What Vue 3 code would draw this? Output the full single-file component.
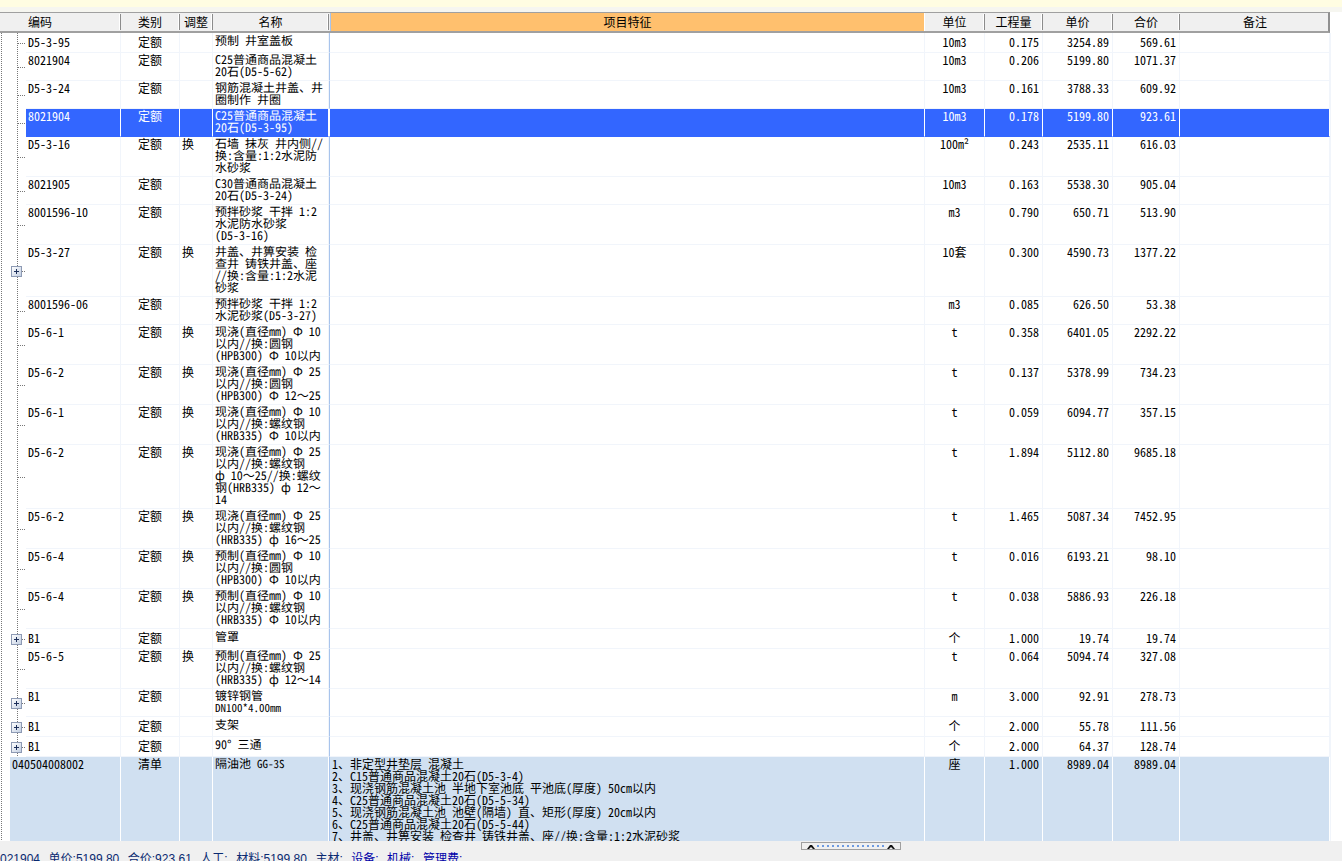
<script setup>
const rows = [
  { code: 'D5-3-95', lines: ['预制 井室盖板'], unit: '10m3', qty: '0.175', price: '3254.89', total: '569.61' },
  { code: '8021904', lines: ['C25普通商品混凝土', '20石(D5-5-62)'], unit: '10m3', qty: '0.206', price: '5199.80', total: '1071.37' },
  { code: 'D5-3-24', lines: ['钢筋混凝土井盖、井', '圈制作 井圈'], unit: '10m3', qty: '0.161', price: '3788.33', total: '609.92' },
  { code: '8021904', selected: true, lines: ['C25普通商品混凝土', '20石(D5-3-95)'], unit: '10m3', qty: '0.178', price: '5199.80', total: '923.61' },
  { code: 'D5-3-16', adj: '换', lines: ['石墙 抹灰 井内侧//', '换:含量:1:2水泥防', '水砂浆'], unit: '100m²', qty: '0.243', price: '2535.11', total: '616.03' },
  { code: '8021905', lines: ['C30普通商品混凝土', '20石(D5-3-24)'], unit: '10m3', qty: '0.163', price: '5538.30', total: '905.04' },
  { code: '8001596-10', lines: ['预拌砂浆 干拌 1:2', '水泥防水砂浆', '(D5-3-16)'], unit: 'm3', qty: '0.790', price: '650.71', total: '513.90' },
  { code: 'D5-3-27', adj: '换', plus: true, lines: ['井盖、井箅安装 检', '查井 铸铁井盖、座', '//换:含量:1:2水泥', '砂浆'], unit: '10套', qty: '0.300', price: '4590.73', total: '1377.22' },
  { code: '8001596-06', lines: ['预拌砂浆 干拌 1:2', '水泥砂浆(D5-3-27)'], unit: 'm3', qty: '0.085', price: '626.50', total: '53.38' },
  { code: 'D5-6-1', adj: '换', lines: ['现浇(直径mm) Ф 10', '以内//换:圆钢', '(HPB300) Ф 10以内'], unit: 't', qty: '0.358', price: '6401.05', total: '2292.22' },
  { code: 'D5-6-2', adj: '换', lines: ['现浇(直径mm) Ф 25', '以内//换:圆钢', '(HPB300) Ф 12～25'], unit: 't', qty: '0.137', price: '5378.99', total: '734.23' },
  { code: 'D5-6-1', adj: '换', lines: ['现浇(直径mm) Ф 10', '以内//换:螺纹钢', '(HRB335) Ф 10以内'], unit: 't', qty: '0.059', price: '6094.77', total: '357.15' },
  { code: 'D5-6-2', adj: '换', lines: ['现浇(直径mm) Ф 25', '以内//换:螺纹钢', 'ф 10～25//换:螺纹', '钢(HRB335) ф 12～', '14'], unit: 't', qty: '1.894', price: '5112.80', total: '9685.18' },
  { code: 'D5-6-2', adj: '换', lines: ['现浇(直径mm) Ф 25', '以内//换:螺纹钢', '(HRB335) ф 16～25'], unit: 't', qty: '1.465', price: '5087.34', total: '7452.95' },
  { code: 'D5-6-4', adj: '换', lines: ['预制(直径mm) Ф 10', '以内//换:圆钢', '(HPB300) Ф 10以内'], unit: 't', qty: '0.016', price: '6193.21', total: '98.10' },
  { code: 'D5-6-4', adj: '换', lines: ['预制(直径mm) Ф 10', '以内//换:螺纹钢', '(HRB335) Ф 10以内'], unit: 't', qty: '0.038', price: '5886.93', total: '226.18' },
  { code: 'B1', plus: true, lines: ['管罩'], unit: '个', qty: '1.000', price: '19.74', total: '19.74' },
  { code: 'D5-6-5', adj: '换', lines: ['预制(直径mm) Ф 25', '以内//换:螺纹钢', '(HRB335) ф 12～14'], unit: 't', qty: '0.064', price: '5094.74', total: '327.08' },
  { code: 'B1', plus: true, lines: ['镀锌钢管', 'DN100*4.00mm'], unit: 'm', qty: '3.000', price: '92.91', total: '278.73' },
  { code: 'B1', plus: true, lines: ['支架'], unit: '个', qty: '2.000', price: '55.78', total: '111.56' },
  { code: 'B1', plus: true, lines: ['90° 三通'], unit: '个', qty: '2.000', price: '64.37', total: '128.74' },
]

const features = [
  '1、非定型井垫层 混凝土',
  '2、C15普通商品混凝土20石(D5-3-4)',
  '3、现浇钢筋混凝土池 半地下室池底 平池底(厚度) 50cm以内',
  '4、C25普通商品混凝土20石(D5-5-34)',
  '5、现浇钢筋混凝土池 池壁(隔墙) 直、矩形(厚度) 20cm以内',
  '6、C25普通商品混凝土20石(D5-5-44)',
  '7、井盖、井箅安装 检查井 铸铁井盖、座//换:含量:1:2水泥砂浆',
]
</script>

<template>
  <div class="page">
    <div class="top-strip"></div>
    <div class="top-gap"></div>

    <div class="head">
      <div class="head-tree"></div>
      <div class="hcell code-head">编码</div>
      <div class="hcell">类别</div>
      <div class="hcell">调整</div>
      <div class="hcell">名称</div>
      <div class="hcell feature-head">项目特征</div>
      <div class="hcell">单位</div>
      <div class="hcell">工程量</div>
      <div class="hcell">单价</div>
      <div class="hcell">合价</div>
      <div class="hcell">备注</div>
    </div>

    <div class="body">
      <div
        v-for="(row, i) in rows"
        :key="i"
        class="row"
        :class="{ selected: row.selected, single: row.lines.length === 1 }"
      >
        <div class="tree">
          <i class="guide outer"></i>
          <i class="guide inner"></i>
          <i class="conn"></i>
          <span v-if="row.plus" class="plus"></span>
        </div>
        <div class="cell code">{{ row.code }}</div>
        <div class="cell center">定额</div>
        <div class="cell">{{ row.adj }}</div>
        <div class="cell name">
          <div
            v-for="(line, j) in row.lines"
            :key="j"
            class="line"
            :class="{ small: line.startsWith('DN100') }"
          >{{ line }}</div>
        </div>
        <div class="cell feature"></div>
        <div class="cell center">{{ row.unit }}</div>
        <div class="cell num">{{ row.qty }}</div>
        <div class="cell num">{{ row.price }}</div>
        <div class="cell num">{{ row.total }}</div>
        <div class="cell"></div>
      </div>

      <div class="row bill">
        <div class="tree">
          <i class="guide outer"></i>
        </div>
        <div class="cell">040504008002</div>
        <div class="cell center">清单</div>
        <div class="cell"></div>
        <div class="cell name">
          <div class="line">隔油池 <span class="small">GG-3S</span></div>
        </div>
        <div class="cell feature">
          <div v-for="(line, j) in features" :key="j" class="line">{{ line }}</div>
        </div>
        <div class="cell center">座</div>
        <div class="cell num">1.000</div>
        <div class="cell num">8989.04</div>
        <div class="cell num">8989.04</div>
        <div class="cell"></div>
      </div>
    </div>

    <div class="status">
      <span>021904</span>
      <span>单价:5199.80</span>
      <span>合价:923.61</span>
      <span>人工:</span>
      <span>材料:5199.80</span>
      <span>主材:</span>
      <span class="deep">设备:</span>
      <span class="deep">机械:</span>
      <span class="deep">管理费:</span>
      <div class="splitter">
        <svg width="8" height="5" viewBox="0 0 8 5"><path d="M0 5 3 1h2l3 4H6L4 3 2 5z" fill="#111" /></svg>
        <span class="grip"></span>
        <svg width="8" height="5" viewBox="0 0 8 5"><path d="M0 5 3 1h2l3 4H6L4 3 2 5z" fill="#111" /></svg>
      </div>
    </div>
  </div>
</template>

<style>
html,
body {
  margin: 0;
  overflow: hidden;
  background: #fff;
}
</style>

<style scoped>
.page {
  position: relative;
  width: 1342px;
  height: 861px;
  overflow: hidden;
  display: flex;
  flex-direction: column;
  font-family: "Noto Sans Mono CJK SC", "Noto Sans CJK SC", "Liberation Mono", monospace;
  font-size: 12px;
  line-height: 12px;
  font-variant-ligatures: none;
  color: #000;
}

.top-strip {
  height: 7px;
  background: #fffde2;
}

.top-gap {
  height: 5px;
  background: #f6f6f0;
}

.head,
.row {
  display: grid;
  width: 1330px;
  grid-template-columns: 26px 95px 59px 33px 116px 596px 60px 58px 70px 67px 150px;
}

.head {
  box-sizing: border-box;
  height: 21px;
  background: #f0f0f0;
  border-top: 1px solid #a0a0a0;
  border-bottom: 2px solid #a0a0a0;
  border-right: 2px solid #909090;
  flex: none;
}

.hcell {
  display: flex;
  align-items: center;
  justify-content: center;
  border-right: 1px solid #8c8c8c;
  box-shadow: inset -1px 0 0 #fff;
  margin: 1px 0;
}

.hcell:last-child {
  border-right: none;
  box-shadow: none;
}

.code-head {
  justify-content: flex-start;
  padding-left: 2px;
}

.feature-head {
  background: #ffc06e;
  margin: 0 0 0 1px;
  border-left: 1px solid #a8c4ec;
  border-right: 1px solid #fff;
  box-shadow: none;
}

.body {
  flex: 1;
  overflow: hidden;
  background: #fff;
  min-height: 0;
}

.row {
  box-sizing: border-box;
  min-height: 20px;
  background: #fff;
  box-shadow: 1px 0 0 #f1f5fb;
}

.cell {
  box-sizing: border-box;
  padding: 1px 2px 2px;
  border-right: 1px solid #f1f5fb;
  border-bottom: 1px solid #f1f5fb;
  white-space: nowrap;
}

.single .cell {
  padding-top: 3px;
}

.single .name {
  padding-top: 2px;
}

.name {
  text-rendering: geometricPrecision;
}

.center {
  text-align: center;
}

.num {
  text-align: right;
  padding-right: 3px;
}

.line {
  height: 12px;
}

.small {
  font-size: 11px;
}

.feature {
  border-left: 1px solid #a8c4ec;
}

.selected .cell {
  background: #3366ff;
  color: #fff;
  border-right-color: #fff;
  border-bottom-color: #3366ff;
}

.selected .feature {
  border-left-color: #fff;
}

.bill {
  grid-template-columns: 10px 111px 59px 33px 116px 596px 60px 58px 70px 67px 150px;
  height: 84px;
  overflow: hidden;
}

.bill .cell {
  background: #d0e0f1;
  border-right-color: #fff;
  border-bottom-color: #d0e0f1;
  padding-top: 1px;
}

.bill .feature {
  border-left-color: #a8c4ec;
  padding-top: 1px;
}

.tree {
  position: relative;
}

.guide {
  position: absolute;
  top: 0;
  bottom: 0;
  width: 1px;
  background: repeating-linear-gradient(#777 0 1px, transparent 1px 2px);
}

.outer {
  left: 1px;
}

.inner {
  left: 17px;
}

.conn {
  position: absolute;
  top: 50%;
  left: 18px;
  width: 8px;
  height: 1px;
  background: repeating-linear-gradient(90deg, #777 0 1px, transparent 1px 2px);
}

.plus {
  position: absolute;
  top: 50%;
  left: 11px;
  box-sizing: border-box;
  width: 11px;
  height: 11px;
  margin-top: -5px;
  border: 1px solid #8d9ab4;
  background: linear-gradient(135deg, #fff, #c3cfe2);
}

.plus::before,
.plus::after {
  content: "";
  position: absolute;
  background: #1d2f5a;
}

.plus::before {
  left: 2px;
  top: 4px;
  width: 5px;
  height: 1px;
}

.plus::after {
  left: 4px;
  top: 2px;
  width: 1px;
  height: 5px;
}

.status {
  position: relative;
  flex: none;
  height: 20px;
  background: #f0f0f0;
  padding-top: 11px;
  box-sizing: border-box;
  display: flex;
  gap: 8.5px;
  font-family: "Liberation Sans", "Noto Sans CJK SC", sans-serif;
  font-size: 12px;
  line-height: 14px;
  color: #0a2a70;
  white-space: nowrap;
}

.deep {
  color: #0000a8;
}

.splitter {
  position: absolute;
  top: 1px;
  left: 801px;
  box-sizing: border-box;
  width: 100px;
  height: 8px;
  border: 1px solid #a0a0a0;
  background: #f0f0f0;
  display: flex;
  align-items: center;
  justify-content: space-between;
  padding: 0 5px;
}

.grip {
  width: 68px;
  height: 2px;
  background: repeating-linear-gradient(90deg, #6d9ae0 0 2px, transparent 2px 5px);
}
</style>
